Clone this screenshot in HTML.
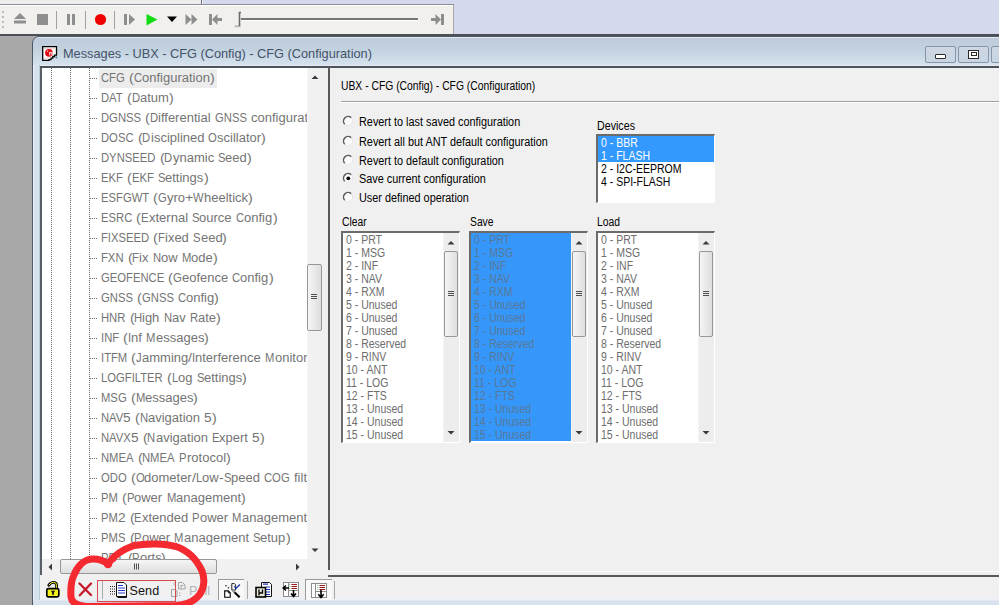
<!DOCTYPE html><html><head><meta charset="utf-8"><title>u-center</title><style>
*{box-sizing:border-box;margin:0;padding:0}
html,body{width:999px;height:605px;overflow:hidden;background:#a8a8a8;font-family:"Liberation Sans",sans-serif;position:relative}
.a{position:absolute}
.tb{background:#f0f0f0}
.it{position:absolute;height:20px;line-height:20px;font-size:12.5px;color:#747474;white-space:nowrap}
.ms{position:absolute;font-size:11px;line-height:13px;color:#000;white-space:nowrap}
.li{position:absolute;left:0;height:13px;line-height:13px;font-size:11px;white-space:nowrap}
</style></head><body>
<div class="a" style="left:0px;top:0px;width:201px;height:4px;background:#ededed"></div>
<div class="a" style="left:201px;top:0px;width:1px;height:4px;background:#6c6c78"></div>
<div class="a" style="left:202px;top:0px;width:1px;height:4px;background:#f4f4f8"></div>
<div class="a" style="left:203px;top:0px;width:796px;height:35px;background:#d5d9ed"></div>
<div class="a" style="left:0px;top:4px;width:454px;height:1px;background:#8c8c94"></div>
<div class="a" style="left:0px;top:5px;width:453px;height:29px;background:#f1f0ec;border-top:1px solid #fff"></div>
<div class="a" style="left:453px;top:5px;width:1px;height:29px;background:#a8a8a8"></div>
<svg class="a" style="left:0px;top:8px" width="8" height="24" viewBox="0 0 8 24"><rect x="2" y="3" width="2" height="2" fill="#bcbcbc"/><rect x="2" y="8" width="2" height="2" fill="#bcbcbc"/><rect x="2" y="13" width="2" height="2" fill="#bcbcbc"/><rect x="2" y="18" width="2" height="2" fill="#bcbcbc"/></svg>
<svg class="a" style="left:12px;top:10px" width="16" height="16" viewBox="0 0 16 16"><path d="M2 9 L8 3 L14 9 Z" fill="#8e8e8e"/><rect x="2" y="10.5" width="12" height="3" fill="#8e8e8e"/></svg>
<div class="a" style="left:37px;top:14px;width:11px;height:11px;background:#8e8e8e"></div>
<div class="a" style="left:56px;top:11px;width:1px;height:18px;background:#a0a0a0"></div>
<div class="a" style="left:67px;top:14px;width:3px;height:11px;background:#8e8e8e"></div>
<div class="a" style="left:72px;top:14px;width:3px;height:11px;background:#8e8e8e"></div>
<div class="a" style="left:85px;top:11px;width:1px;height:18px;background:#a0a0a0"></div>
<svg class="a" style="left:94px;top:13px" width="13" height="13" viewBox="0 0 13 13"><circle cx="6.5" cy="6.5" r="5.6" fill="#ee0000"/></svg>
<div class="a" style="left:114px;top:11px;width:1px;height:18px;background:#a0a0a0"></div>
<svg class="a" style="left:122px;top:12px" width="16" height="16" viewBox="0 0 16 16"><rect x="2" y="2" width="3" height="11" fill="#8e8e8e"/><path d="M7 2 L13 7.5 L7 13 Z" fill="#8e8e8e"/></svg>
<svg class="a" style="left:145px;top:12px" width="16" height="16" viewBox="0 0 16 16"><path d="M1.5 2 L12.5 7.5 L1.5 13.5 Z" fill="#11dd11"/></svg>
<svg class="a" style="left:166px;top:15px" width="12" height="8" viewBox="0 0 12 8"><path d="M1 1.5 L11 1.5 L6 7 Z" fill="#000"/></svg>
<svg class="a" style="left:184px;top:12px" width="16" height="16" viewBox="0 0 16 16"><path d="M1.5 2 L7.5 7.5 L1.5 13 Z M7.5 2 L13.5 7.5 L7.5 13 Z" fill="#8e8e8e"/></svg>
<svg class="a" style="left:207px;top:12px" width="17" height="16" viewBox="0 0 17 16"><rect x="2" y="2" width="3" height="11" fill="#8e8e8e"/><path d="M5 7.5 L10.5 2 L10.5 6 L15 6 L15 9 L10.5 9 L10.5 13 Z" fill="#8e8e8e"/></svg>
<div class="a" style="left:241px;top:18px;width:177px;height:3px;background:#777;border-bottom:1px solid #fff"></div>
<svg class="a" style="left:233px;top:11px" width="10" height="17" viewBox="0 0 10 17"><path d="M1.5 15.5 H6.5 V1.5 H8" stroke="#6a6a6a" stroke-width="1.6" fill="none"/><path d="M0 16 H7" stroke="#fff" stroke-width="1"/></svg>
<svg class="a" style="left:429px;top:12px" width="17" height="16" viewBox="0 0 17 16"><rect x="12" y="2" width="3" height="11" fill="#8e8e8e"/><path d="M12 7.5 L6.5 2 L6.5 6 L2 6 L2 9 L6.5 9 L6.5 13 Z" fill="#8e8e8e"/></svg>
<div class="a" style="left:0px;top:34px;width:999px;height:2px;background:#4b4f57"></div>
<div class="a" style="left:32px;top:36px;width:981px;height:580px;border:1px solid #4f5966;border-radius:7px 0 0 0;background:linear-gradient(#e2e9ee 0,#e2e9ee 1px,#c0cbdc 1px,#c2d2de 13px,#d3e1ed 27px,#dbe6ef 28px,#d3e1ee 28px)"></div>
<svg class="a" style="left:42px;top:46px" width="17" height="16" viewBox="0 0 17 16"><path d="M0.7 0.7 H14.5 V9.2 H12.5 V10.5 H10.8 V12.2 H9 V13.6 H7 V14.4 H0.7 Z" fill="#fff" stroke="#000" stroke-width="1.3"/><path d="M2 2.5 H13 M2 12 H8" stroke="#f6caca" stroke-width="0.8"/><circle cx="7" cy="6.8" r="3.9" fill="#e00a14"/><circle cx="5.6" cy="5.2" r="0.7" fill="#ffc8c8"/><path d="M7.6 9.5 V6.2 M9.2 9.5 V6.2 M10.8 9.5 V6.5 M7.6 6.4 H10.6" stroke="#fff3f3" stroke-width="0.8" fill="none"/><circle cx="14.4" cy="11.4" r="0.9" fill="#2a7a90"/></svg>
<div class="a" style="left:63px;top:45px;font-size:12.75px;color:#44526a;white-space:nowrap;line-height:18px">Messages - UBX - CFG (Config) - CFG (Configuration)</div>
<div class="a" style="left:925px;top:46px;width:31px;height:17px;border:1px solid #8795a7;border-radius:2px;background:linear-gradient(#cdd7e3,#c9d5e2)"></div>
<div class="a" style="left:958px;top:46px;width:31px;height:17px;border:1px solid #8795a7;border-radius:2px;background:linear-gradient(#cdd7e3,#c9d5e2)"></div>
<div class="a" style="left:991px;top:46px;width:31px;height:17px;border:1px solid #8795a7;border-radius:2px;background:linear-gradient(#cdd7e3,#c9d5e2)"></div>
<div class="a" style="left:935px;top:54px;width:11px;height:5px;border:1px solid #2a2a2a;border-radius:1px;background:#fff"></div>
<div class="a" style="left:968px;top:50px;width:11px;height:9px;border:1px solid #2a2a2a;background:#fff"></div>
<div class="a" style="left:971px;top:52px;width:6px;height:4px;border:1px solid #2a2a2a;background:#fff"></div>
<div class="a" style="left:40px;top:65px;width:959px;height:1px;background:#e3eaef"></div>
<div class="a" style="left:40px;top:66px;width:959px;height:2px;background:#4e535a"></div>
<div class="a" style="left:40px;top:68px;width:959px;height:532px;background:#f0f0f0"></div>
<div class="a" style="left:34px;top:598px;width:965px;height:7px;background:linear-gradient(#eff1f5 0,#eaeff6 2px,#d9e1eb 3px,#d8e2ed 5px,#d6e4f0 6px)"></div>
<div class="a" style="left:33px;top:65px;width:1px;height:535px;background:#eef3f7"></div>
<div class="a" style="left:34px;top:65px;width:6px;height:535px;background:linear-gradient(90deg,#d3e1ee,#d6e4f0 80%,#a8b4c0)"></div>
<div class="a" style="left:40px;top:68px;width:2px;height:507px;background:#5a5f66"></div>
<div class="a" style="left:42px;top:68px;width:265px;height:491px;background:#fff"></div>
<div class="a" style="left:42px;top:68px;width:265px;height:491px;overflow:hidden">
<div class="a" style="left:57px;top:1px;width:118px;height:19px;background:#ececec"></div>
<div class="a" style="left:9px;top:0;width:1px;height:491px;background:repeating-linear-gradient(#6a6a6a 0 1px,transparent 1px 2px)"></div>
<div class="a" style="left:28px;top:0;width:1px;height:491px;background:repeating-linear-gradient(#6a6a6a 0 1px,transparent 1px 2px)"></div>
<div class="a" style="left:47px;top:0;width:1px;height:491px;background:repeating-linear-gradient(#6a6a6a 0 1px,transparent 1px 2px)"></div>
<div class="a" style="left:48px;top:10px;width:8px;height:1px;background:repeating-linear-gradient(90deg,#6a6a6a 0 1px,transparent 1px 2px)"></div>
<div class="it" style="left:59px;top:0px"><span style="display:inline-block;white-space:pre;transform:scaleX(0.9);transform-origin:0 0;margin-right:-2.64px">CFG</span><span style="display:inline-block;white-space:pre;transform:scaleX(1.21);transform-origin:0 0;margin-right:0.73px"> </span><span style="display:inline-block;white-space:pre;transform:scaleX(1.14);transform-origin:0 0;margin-right:0.58px">(</span><span style="display:inline-block;white-space:pre;transform:scaleX(0.9);transform-origin:0 0;margin-right:-0.90px">C</span><span style="display:inline-block;white-space:pre;transform:scaleX(1.04);transform-origin:0 0;margin-right:2.61px">onfiguration</span><span style="display:inline-block;white-space:pre;transform:scaleX(1.14);transform-origin:0 0;margin-right:0.58px">)</span></div>
<div class="a" style="left:48px;top:30px;width:8px;height:1px;background:repeating-linear-gradient(90deg,#6a6a6a 0 1px,transparent 1px 2px)"></div>
<div class="it" style="left:59px;top:20px"><span style="display:inline-block;white-space:pre;transform:scaleX(0.9);transform-origin:0 0;margin-right:-2.41px">DAT</span><span style="display:inline-block;white-space:pre;transform:scaleX(1.21);transform-origin:0 0;margin-right:0.73px"> </span><span style="display:inline-block;white-space:pre;transform:scaleX(1.14);transform-origin:0 0;margin-right:0.58px">(</span><span style="display:inline-block;white-space:pre;transform:scaleX(0.9);transform-origin:0 0;margin-right:-0.90px">D</span><span style="display:inline-block;white-space:pre;transform:scaleX(1.04);transform-origin:0 0;margin-right:1.11px">atum</span><span style="display:inline-block;white-space:pre;transform:scaleX(1.14);transform-origin:0 0;margin-right:0.58px">)</span></div>
<div class="a" style="left:48px;top:50px;width:8px;height:1px;background:repeating-linear-gradient(90deg,#6a6a6a 0 1px,transparent 1px 2px)"></div>
<div class="it" style="left:59px;top:40px"><span style="display:inline-block;white-space:pre;transform:scaleX(0.9);transform-origin:0 0;margin-right:-4.45px">DGNSS</span><span style="display:inline-block;white-space:pre;transform:scaleX(1.21);transform-origin:0 0;margin-right:0.73px"> </span><span style="display:inline-block;white-space:pre;transform:scaleX(1.14);transform-origin:0 0;margin-right:0.58px">(</span><span style="display:inline-block;white-space:pre;transform:scaleX(0.9);transform-origin:0 0;margin-right:-0.90px">D</span><span style="display:inline-block;white-space:pre;transform:scaleX(1.04);transform-origin:0 0;margin-right:2.02px">ifferential</span><span style="display:inline-block;white-space:pre;transform:scaleX(1.21);transform-origin:0 0;margin-right:0.73px"> </span><span style="display:inline-block;white-space:pre;transform:scaleX(0.9);transform-origin:0 0;margin-right:-3.54px">GNSS</span><span style="display:inline-block;white-space:pre;transform:scaleX(1.21);transform-origin:0 0;margin-right:0.73px"> </span><span style="display:inline-block;white-space:pre;transform:scaleX(1.04);transform-origin:0 0;margin-right:2.86px">configuration</span><span style="display:inline-block;white-space:pre;transform:scaleX(1.14);transform-origin:0 0;margin-right:0.58px">)</span></div>
<div class="a" style="left:48px;top:70px;width:8px;height:1px;background:repeating-linear-gradient(90deg,#6a6a6a 0 1px,transparent 1px 2px)"></div>
<div class="it" style="left:59px;top:60px"><span style="display:inline-block;white-space:pre;transform:scaleX(0.9);transform-origin:0 0;margin-right:-3.61px">DOSC</span><span style="display:inline-block;white-space:pre;transform:scaleX(1.21);transform-origin:0 0;margin-right:0.73px"> </span><span style="display:inline-block;white-space:pre;transform:scaleX(1.14);transform-origin:0 0;margin-right:0.58px">(</span><span style="display:inline-block;white-space:pre;transform:scaleX(0.9);transform-origin:0 0;margin-right:-0.90px">D</span><span style="display:inline-block;white-space:pre;transform:scaleX(1.04);transform-origin:0 0;margin-right:2.06px">isciplined</span><span style="display:inline-block;white-space:pre;transform:scaleX(1.21);transform-origin:0 0;margin-right:0.73px"> </span><span style="display:inline-block;white-space:pre;transform:scaleX(0.9);transform-origin:0 0;margin-right:-0.97px">O</span><span style="display:inline-block;white-space:pre;transform:scaleX(1.04);transform-origin:0 0;margin-right:1.69px">scillator</span><span style="display:inline-block;white-space:pre;transform:scaleX(1.14);transform-origin:0 0;margin-right:0.58px">)</span></div>
<div class="a" style="left:48px;top:90px;width:8px;height:1px;background:repeating-linear-gradient(90deg,#6a6a6a 0 1px,transparent 1px 2px)"></div>
<div class="it" style="left:59px;top:80px"><span style="display:inline-block;white-space:pre;transform:scaleX(0.9);transform-origin:0 0;margin-right:-6.04px">DYNSEED</span><span style="display:inline-block;white-space:pre;transform:scaleX(1.21);transform-origin:0 0;margin-right:0.73px"> </span><span style="display:inline-block;white-space:pre;transform:scaleX(1.14);transform-origin:0 0;margin-right:0.58px">(</span><span style="display:inline-block;white-space:pre;transform:scaleX(0.9);transform-origin:0 0;margin-right:-0.90px">D</span><span style="display:inline-block;white-space:pre;transform:scaleX(1.04);transform-origin:0 0;margin-right:1.58px">ynamic</span><span style="display:inline-block;white-space:pre;transform:scaleX(1.21);transform-origin:0 0;margin-right:0.73px"> </span><span style="display:inline-block;white-space:pre;transform:scaleX(0.9);transform-origin:0 0;margin-right:-0.83px">S</span><span style="display:inline-block;white-space:pre;transform:scaleX(1.04);transform-origin:0 0;margin-right:0.83px">eed</span><span style="display:inline-block;white-space:pre;transform:scaleX(1.14);transform-origin:0 0;margin-right:0.58px">)</span></div>
<div class="a" style="left:48px;top:110px;width:8px;height:1px;background:repeating-linear-gradient(90deg,#6a6a6a 0 1px,transparent 1px 2px)"></div>
<div class="it" style="left:59px;top:100px"><span style="display:inline-block;white-space:pre;transform:scaleX(0.9);transform-origin:0 0;margin-right:-2.43px">EKF</span><span style="display:inline-block;white-space:pre;transform:scaleX(1.21);transform-origin:0 0;margin-right:0.73px"> </span><span style="display:inline-block;white-space:pre;transform:scaleX(1.14);transform-origin:0 0;margin-right:0.58px">(</span><span style="display:inline-block;white-space:pre;transform:scaleX(0.9);transform-origin:0 0;margin-right:-2.43px">EKF</span><span style="display:inline-block;white-space:pre;transform:scaleX(1.21);transform-origin:0 0;margin-right:0.73px"> </span><span style="display:inline-block;white-space:pre;transform:scaleX(0.9);transform-origin:0 0;margin-right:-0.83px">S</span><span style="display:inline-block;white-space:pre;transform:scaleX(1.04);transform-origin:0 0;margin-right:1.47px">ettings</span><span style="display:inline-block;white-space:pre;transform:scaleX(1.14);transform-origin:0 0;margin-right:0.58px">)</span></div>
<div class="a" style="left:48px;top:130px;width:8px;height:1px;background:repeating-linear-gradient(90deg,#6a6a6a 0 1px,transparent 1px 2px)"></div>
<div class="it" style="left:59px;top:120px"><span style="display:inline-block;white-space:pre;transform:scaleX(0.9);transform-origin:0 0;margin-right:-5.35px">ESFGWT</span><span style="display:inline-block;white-space:pre;transform:scaleX(1.21);transform-origin:0 0;margin-right:0.73px"> </span><span style="display:inline-block;white-space:pre;transform:scaleX(1.14);transform-origin:0 0;margin-right:0.58px">(</span><span style="display:inline-block;white-space:pre;transform:scaleX(0.9);transform-origin:0 0;margin-right:-0.97px">G</span><span style="display:inline-block;white-space:pre;transform:scaleX(1.04);transform-origin:0 0;margin-right:0.69px">yro</span><span style="display:inline-block;white-space:pre;transform:scaleX(1.14);transform-origin:0 0;margin-right:1.02px">+</span><span style="display:inline-block;white-space:pre;transform:scaleX(0.9);transform-origin:0 0;margin-right:-1.18px">W</span><span style="display:inline-block;white-space:pre;transform:scaleX(1.04);transform-origin:0 0;margin-right:1.70px">heeltick</span><span style="display:inline-block;white-space:pre;transform:scaleX(1.14);transform-origin:0 0;margin-right:0.58px">)</span></div>
<div class="a" style="left:48px;top:150px;width:8px;height:1px;background:repeating-linear-gradient(90deg,#6a6a6a 0 1px,transparent 1px 2px)"></div>
<div class="it" style="left:59px;top:140px"><span style="display:inline-block;white-space:pre;transform:scaleX(0.9);transform-origin:0 0;margin-right:-3.47px">ESRC</span><span style="display:inline-block;white-space:pre;transform:scaleX(1.21);transform-origin:0 0;margin-right:0.73px"> </span><span style="display:inline-block;white-space:pre;transform:scaleX(1.14);transform-origin:0 0;margin-right:0.58px">(</span><span style="display:inline-block;white-space:pre;transform:scaleX(0.9);transform-origin:0 0;margin-right:-0.83px">E</span><span style="display:inline-block;white-space:pre;transform:scaleX(1.04);transform-origin:0 0;margin-right:1.50px">xternal</span><span style="display:inline-block;white-space:pre;transform:scaleX(1.21);transform-origin:0 0;margin-right:0.73px"> </span><span style="display:inline-block;white-space:pre;transform:scaleX(0.9);transform-origin:0 0;margin-right:-0.83px">S</span><span style="display:inline-block;white-space:pre;transform:scaleX(1.04);transform-origin:0 0;margin-right:1.25px">ource</span><span style="display:inline-block;white-space:pre;transform:scaleX(1.21);transform-origin:0 0;margin-right:0.73px"> </span><span style="display:inline-block;white-space:pre;transform:scaleX(0.9);transform-origin:0 0;margin-right:-0.90px">C</span><span style="display:inline-block;white-space:pre;transform:scaleX(1.04);transform-origin:0 0;margin-right:1.08px">onfig</span><span style="display:inline-block;white-space:pre;transform:scaleX(1.14);transform-origin:0 0;margin-right:0.58px">)</span></div>
<div class="a" style="left:48px;top:170px;width:8px;height:1px;background:repeating-linear-gradient(90deg,#6a6a6a 0 1px,transparent 1px 2px)"></div>
<div class="it" style="left:59px;top:160px"><span style="display:inline-block;white-space:pre;transform:scaleX(0.9);transform-origin:0 0;margin-right:-5.35px">FIXSEED</span><span style="display:inline-block;white-space:pre;transform:scaleX(1.21);transform-origin:0 0;margin-right:0.73px"> </span><span style="display:inline-block;white-space:pre;transform:scaleX(1.14);transform-origin:0 0;margin-right:0.58px">(</span><span style="display:inline-block;white-space:pre;transform:scaleX(0.9);transform-origin:0 0;margin-right:-0.76px">F</span><span style="display:inline-block;white-space:pre;transform:scaleX(1.04);transform-origin:0 0;margin-right:0.92px">ixed</span><span style="display:inline-block;white-space:pre;transform:scaleX(1.21);transform-origin:0 0;margin-right:0.73px"> </span><span style="display:inline-block;white-space:pre;transform:scaleX(0.9);transform-origin:0 0;margin-right:-0.83px">S</span><span style="display:inline-block;white-space:pre;transform:scaleX(1.04);transform-origin:0 0;margin-right:0.83px">eed</span><span style="display:inline-block;white-space:pre;transform:scaleX(1.14);transform-origin:0 0;margin-right:0.58px">)</span></div>
<div class="a" style="left:48px;top:190px;width:8px;height:1px;background:repeating-linear-gradient(90deg,#6a6a6a 0 1px,transparent 1px 2px)"></div>
<div class="it" style="left:59px;top:180px"><span style="display:inline-block;white-space:pre;transform:scaleX(0.9);transform-origin:0 0;margin-right:-2.50px">FXN</span><span style="display:inline-block;white-space:pre;transform:scaleX(1.21);transform-origin:0 0;margin-right:0.73px"> </span><span style="display:inline-block;white-space:pre;transform:scaleX(1.14);transform-origin:0 0;margin-right:0.58px">(</span><span style="display:inline-block;white-space:pre;transform:scaleX(0.9);transform-origin:0 0;margin-right:-0.76px">F</span><span style="display:inline-block;white-space:pre;transform:scaleX(1.04);transform-origin:0 0;margin-right:0.36px">ix</span><span style="display:inline-block;white-space:pre;transform:scaleX(1.21);transform-origin:0 0;margin-right:0.73px"> </span><span style="display:inline-block;white-space:pre;transform:scaleX(0.9);transform-origin:0 0;margin-right:-0.90px">N</span><span style="display:inline-block;white-space:pre;transform:scaleX(1.04);transform-origin:0 0;margin-right:0.64px">ow</span><span style="display:inline-block;white-space:pre;transform:scaleX(1.21);transform-origin:0 0;margin-right:0.73px"> </span><span style="display:inline-block;white-space:pre;transform:scaleX(0.9);transform-origin:0 0;margin-right:-1.04px">M</span><span style="display:inline-block;white-space:pre;transform:scaleX(1.04);transform-origin:0 0;margin-right:0.83px">ode</span><span style="display:inline-block;white-space:pre;transform:scaleX(1.14);transform-origin:0 0;margin-right:0.58px">)</span></div>
<div class="a" style="left:48px;top:210px;width:8px;height:1px;background:repeating-linear-gradient(90deg,#6a6a6a 0 1px,transparent 1px 2px)"></div>
<div class="it" style="left:59px;top:200px"><span style="display:inline-block;white-space:pre;transform:scaleX(0.9);transform-origin:0 0;margin-right:-7.01px">GEOFENCE</span><span style="display:inline-block;white-space:pre;transform:scaleX(1.21);transform-origin:0 0;margin-right:0.73px"> </span><span style="display:inline-block;white-space:pre;transform:scaleX(1.14);transform-origin:0 0;margin-right:0.58px">(</span><span style="display:inline-block;white-space:pre;transform:scaleX(0.9);transform-origin:0 0;margin-right:-0.97px">G</span><span style="display:inline-block;white-space:pre;transform:scaleX(1.04);transform-origin:0 0;margin-right:1.78px">eofence</span><span style="display:inline-block;white-space:pre;transform:scaleX(1.21);transform-origin:0 0;margin-right:0.73px"> </span><span style="display:inline-block;white-space:pre;transform:scaleX(0.9);transform-origin:0 0;margin-right:-0.90px">C</span><span style="display:inline-block;white-space:pre;transform:scaleX(1.04);transform-origin:0 0;margin-right:1.08px">onfig</span><span style="display:inline-block;white-space:pre;transform:scaleX(1.14);transform-origin:0 0;margin-right:0.58px">)</span></div>
<div class="a" style="left:48px;top:230px;width:8px;height:1px;background:repeating-linear-gradient(90deg,#6a6a6a 0 1px,transparent 1px 2px)"></div>
<div class="it" style="left:59px;top:220px"><span style="display:inline-block;white-space:pre;transform:scaleX(0.9);transform-origin:0 0;margin-right:-3.54px">GNSS</span><span style="display:inline-block;white-space:pre;transform:scaleX(1.21);transform-origin:0 0;margin-right:0.73px"> </span><span style="display:inline-block;white-space:pre;transform:scaleX(1.14);transform-origin:0 0;margin-right:0.58px">(</span><span style="display:inline-block;white-space:pre;transform:scaleX(0.9);transform-origin:0 0;margin-right:-3.54px">GNSS</span><span style="display:inline-block;white-space:pre;transform:scaleX(1.21);transform-origin:0 0;margin-right:0.73px"> </span><span style="display:inline-block;white-space:pre;transform:scaleX(0.9);transform-origin:0 0;margin-right:-0.90px">C</span><span style="display:inline-block;white-space:pre;transform:scaleX(1.04);transform-origin:0 0;margin-right:1.08px">onfig</span><span style="display:inline-block;white-space:pre;transform:scaleX(1.14);transform-origin:0 0;margin-right:0.58px">)</span></div>
<div class="a" style="left:48px;top:250px;width:8px;height:1px;background:repeating-linear-gradient(90deg,#6a6a6a 0 1px,transparent 1px 2px)"></div>
<div class="it" style="left:59px;top:240px"><span style="display:inline-block;white-space:pre;transform:scaleX(0.9);transform-origin:0 0;margin-right:-2.71px">HNR</span><span style="display:inline-block;white-space:pre;transform:scaleX(1.21);transform-origin:0 0;margin-right:0.73px"> </span><span style="display:inline-block;white-space:pre;transform:scaleX(1.14);transform-origin:0 0;margin-right:0.58px">(</span><span style="display:inline-block;white-space:pre;transform:scaleX(0.9);transform-origin:0 0;margin-right:-0.90px">H</span><span style="display:inline-block;white-space:pre;transform:scaleX(1.04);transform-origin:0 0;margin-right:0.67px">igh</span><span style="display:inline-block;white-space:pre;transform:scaleX(1.21);transform-origin:0 0;margin-right:0.73px"> </span><span style="display:inline-block;white-space:pre;transform:scaleX(0.9);transform-origin:0 0;margin-right:-0.90px">N</span><span style="display:inline-block;white-space:pre;transform:scaleX(1.04);transform-origin:0 0;margin-right:0.53px">av</span><span style="display:inline-block;white-space:pre;transform:scaleX(1.21);transform-origin:0 0;margin-right:0.73px"> </span><span style="display:inline-block;white-space:pre;transform:scaleX(0.9);transform-origin:0 0;margin-right:-0.90px">R</span><span style="display:inline-block;white-space:pre;transform:scaleX(1.04);transform-origin:0 0;margin-right:0.70px">ate</span><span style="display:inline-block;white-space:pre;transform:scaleX(1.14);transform-origin:0 0;margin-right:0.58px">)</span></div>
<div class="a" style="left:48px;top:270px;width:8px;height:1px;background:repeating-linear-gradient(90deg,#6a6a6a 0 1px,transparent 1px 2px)"></div>
<div class="it" style="left:59px;top:260px"><span style="display:inline-block;white-space:pre;transform:scaleX(0.9);transform-origin:0 0;margin-right:-2.01px">INF</span><span style="display:inline-block;white-space:pre;transform:scaleX(1.21);transform-origin:0 0;margin-right:0.73px"> </span><span style="display:inline-block;white-space:pre;transform:scaleX(1.14);transform-origin:0 0;margin-right:0.58px">(</span><span style="display:inline-block;white-space:pre;transform:scaleX(0.9);transform-origin:0 0;margin-right:-0.35px">I</span><span style="display:inline-block;white-space:pre;transform:scaleX(1.04);transform-origin:0 0;margin-right:0.42px">nf</span><span style="display:inline-block;white-space:pre;transform:scaleX(1.21);transform-origin:0 0;margin-right:0.73px"> </span><span style="display:inline-block;white-space:pre;transform:scaleX(0.9);transform-origin:0 0;margin-right:-1.04px">M</span><span style="display:inline-block;white-space:pre;transform:scaleX(1.04);transform-origin:0 0;margin-right:1.86px">essages</span><span style="display:inline-block;white-space:pre;transform:scaleX(1.14);transform-origin:0 0;margin-right:0.58px">)</span></div>
<div class="a" style="left:48px;top:290px;width:8px;height:1px;background:repeating-linear-gradient(90deg,#6a6a6a 0 1px,transparent 1px 2px)"></div>
<div class="it" style="left:59px;top:280px"><span style="display:inline-block;white-space:pre;transform:scaleX(0.9);transform-origin:0 0;margin-right:-2.92px">ITFM</span><span style="display:inline-block;white-space:pre;transform:scaleX(1.21);transform-origin:0 0;margin-right:0.73px"> </span><span style="display:inline-block;white-space:pre;transform:scaleX(1.14);transform-origin:0 0;margin-right:0.58px">(</span><span style="display:inline-block;white-space:pre;transform:scaleX(0.9);transform-origin:0 0;margin-right:-0.62px">J</span><span style="display:inline-block;white-space:pre;transform:scaleX(1.04);transform-origin:0 0;margin-right:1.78px">amming</span><span style="display:inline-block;white-space:pre;transform:scaleX(1.14);transform-origin:0 0;margin-right:0.49px">/</span><span style="display:inline-block;white-space:pre;transform:scaleX(0.9);transform-origin:0 0;margin-right:-0.35px">I</span><span style="display:inline-block;white-space:pre;transform:scaleX(1.04);transform-origin:0 0;margin-right:2.53px">nterference</span><span style="display:inline-block;white-space:pre;transform:scaleX(1.21);transform-origin:0 0;margin-right:0.73px"> </span><span style="display:inline-block;white-space:pre;transform:scaleX(0.9);transform-origin:0 0;margin-right:-1.04px">M</span><span style="display:inline-block;white-space:pre;transform:scaleX(1.04);transform-origin:0 0;margin-right:1.25px">onitor</span><span style="display:inline-block;white-space:pre;transform:scaleX(1.14);transform-origin:0 0;margin-right:0.58px">)</span></div>
<div class="a" style="left:48px;top:310px;width:8px;height:1px;background:repeating-linear-gradient(90deg,#6a6a6a 0 1px,transparent 1px 2px)"></div>
<div class="it" style="left:59px;top:300px"><span style="display:inline-block;white-space:pre;transform:scaleX(0.9);transform-origin:0 0;margin-right:-6.85px">LOGFILTER</span><span style="display:inline-block;white-space:pre;transform:scaleX(1.21);transform-origin:0 0;margin-right:0.73px"> </span><span style="display:inline-block;white-space:pre;transform:scaleX(1.14);transform-origin:0 0;margin-right:0.58px">(</span><span style="display:inline-block;white-space:pre;transform:scaleX(0.9);transform-origin:0 0;margin-right:-0.70px">L</span><span style="display:inline-block;white-space:pre;transform:scaleX(1.04);transform-origin:0 0;margin-right:0.56px">og</span><span style="display:inline-block;white-space:pre;transform:scaleX(1.21);transform-origin:0 0;margin-right:0.73px"> </span><span style="display:inline-block;white-space:pre;transform:scaleX(0.9);transform-origin:0 0;margin-right:-0.83px">S</span><span style="display:inline-block;white-space:pre;transform:scaleX(1.04);transform-origin:0 0;margin-right:1.47px">ettings</span><span style="display:inline-block;white-space:pre;transform:scaleX(1.14);transform-origin:0 0;margin-right:0.58px">)</span></div>
<div class="a" style="left:48px;top:330px;width:8px;height:1px;background:repeating-linear-gradient(90deg,#6a6a6a 0 1px,transparent 1px 2px)"></div>
<div class="it" style="left:59px;top:320px"><span style="display:inline-block;white-space:pre;transform:scaleX(0.9);transform-origin:0 0;margin-right:-2.85px">MSG</span><span style="display:inline-block;white-space:pre;transform:scaleX(1.21);transform-origin:0 0;margin-right:0.73px"> </span><span style="display:inline-block;white-space:pre;transform:scaleX(1.14);transform-origin:0 0;margin-right:0.58px">(</span><span style="display:inline-block;white-space:pre;transform:scaleX(0.9);transform-origin:0 0;margin-right:-1.04px">M</span><span style="display:inline-block;white-space:pre;transform:scaleX(1.04);transform-origin:0 0;margin-right:1.86px">essages</span><span style="display:inline-block;white-space:pre;transform:scaleX(1.14);transform-origin:0 0;margin-right:0.58px">)</span></div>
<div class="a" style="left:48px;top:350px;width:8px;height:1px;background:repeating-linear-gradient(90deg,#6a6a6a 0 1px,transparent 1px 2px)"></div>
<div class="it" style="left:59px;top:340px"><span style="display:inline-block;white-space:pre;transform:scaleX(0.9);transform-origin:0 0;margin-right:-2.48px">NAV</span><span style="display:inline-block;white-space:pre;transform:scaleX(1.1);transform-origin:0 0;margin-right:0.70px">5</span><span style="display:inline-block;white-space:pre;transform:scaleX(1.21);transform-origin:0 0;margin-right:0.73px"> </span><span style="display:inline-block;white-space:pre;transform:scaleX(1.14);transform-origin:0 0;margin-right:0.58px">(</span><span style="display:inline-block;white-space:pre;transform:scaleX(0.9);transform-origin:0 0;margin-right:-0.90px">N</span><span style="display:inline-block;white-space:pre;transform:scaleX(1.04);transform-origin:0 0;margin-right:2.00px">avigation</span><span style="display:inline-block;white-space:pre;transform:scaleX(1.21);transform-origin:0 0;margin-right:0.73px"> </span><span style="display:inline-block;white-space:pre;transform:scaleX(1.1);transform-origin:0 0;margin-right:0.70px">5</span><span style="display:inline-block;white-space:pre;transform:scaleX(1.14);transform-origin:0 0;margin-right:0.58px">)</span></div>
<div class="a" style="left:48px;top:370px;width:8px;height:1px;background:repeating-linear-gradient(90deg,#6a6a6a 0 1px,transparent 1px 2px)"></div>
<div class="it" style="left:59px;top:360px"><span style="display:inline-block;white-space:pre;transform:scaleX(0.9);transform-origin:0 0;margin-right:-3.31px">NAVX</span><span style="display:inline-block;white-space:pre;transform:scaleX(1.1);transform-origin:0 0;margin-right:0.70px">5</span><span style="display:inline-block;white-space:pre;transform:scaleX(1.21);transform-origin:0 0;margin-right:0.73px"> </span><span style="display:inline-block;white-space:pre;transform:scaleX(1.14);transform-origin:0 0;margin-right:0.58px">(</span><span style="display:inline-block;white-space:pre;transform:scaleX(0.9);transform-origin:0 0;margin-right:-0.90px">N</span><span style="display:inline-block;white-space:pre;transform:scaleX(1.04);transform-origin:0 0;margin-right:2.00px">avigation</span><span style="display:inline-block;white-space:pre;transform:scaleX(1.21);transform-origin:0 0;margin-right:0.73px"> </span><span style="display:inline-block;white-space:pre;transform:scaleX(0.9);transform-origin:0 0;margin-right:-0.83px">E</span><span style="display:inline-block;white-space:pre;transform:scaleX(1.04);transform-origin:0 0;margin-right:1.11px">xpert</span><span style="display:inline-block;white-space:pre;transform:scaleX(1.21);transform-origin:0 0;margin-right:0.73px"> </span><span style="display:inline-block;white-space:pre;transform:scaleX(1.1);transform-origin:0 0;margin-right:0.70px">5</span><span style="display:inline-block;white-space:pre;transform:scaleX(1.14);transform-origin:0 0;margin-right:0.58px">)</span></div>
<div class="a" style="left:48px;top:390px;width:8px;height:1px;background:repeating-linear-gradient(90deg,#6a6a6a 0 1px,transparent 1px 2px)"></div>
<div class="it" style="left:59px;top:380px"><span style="display:inline-block;white-space:pre;transform:scaleX(0.9);transform-origin:0 0;margin-right:-3.61px">NMEA</span><span style="display:inline-block;white-space:pre;transform:scaleX(1.21);transform-origin:0 0;margin-right:0.73px"> </span><span style="display:inline-block;white-space:pre;transform:scaleX(1.14);transform-origin:0 0;margin-right:0.58px">(</span><span style="display:inline-block;white-space:pre;transform:scaleX(0.9);transform-origin:0 0;margin-right:-3.61px">NMEA</span><span style="display:inline-block;white-space:pre;transform:scaleX(1.21);transform-origin:0 0;margin-right:0.73px"> </span><span style="display:inline-block;white-space:pre;transform:scaleX(0.9);transform-origin:0 0;margin-right:-0.83px">P</span><span style="display:inline-block;white-space:pre;transform:scaleX(1.04);transform-origin:0 0;margin-right:1.50px">rotocol</span><span style="display:inline-block;white-space:pre;transform:scaleX(1.14);transform-origin:0 0;margin-right:0.58px">)</span></div>
<div class="a" style="left:48px;top:410px;width:8px;height:1px;background:repeating-linear-gradient(90deg,#6a6a6a 0 1px,transparent 1px 2px)"></div>
<div class="it" style="left:59px;top:400px"><span style="display:inline-block;white-space:pre;transform:scaleX(0.9);transform-origin:0 0;margin-right:-2.85px">ODO</span><span style="display:inline-block;white-space:pre;transform:scaleX(1.21);transform-origin:0 0;margin-right:0.73px"> </span><span style="display:inline-block;white-space:pre;transform:scaleX(1.14);transform-origin:0 0;margin-right:0.58px">(</span><span style="display:inline-block;white-space:pre;transform:scaleX(0.9);transform-origin:0 0;margin-right:-0.97px">O</span><span style="display:inline-block;white-space:pre;transform:scaleX(1.04);transform-origin:0 0;margin-right:1.83px">dometer</span><span style="display:inline-block;white-space:pre;transform:scaleX(1.14);transform-origin:0 0;margin-right:0.49px">/</span><span style="display:inline-block;white-space:pre;transform:scaleX(0.9);transform-origin:0 0;margin-right:-0.70px">L</span><span style="display:inline-block;white-space:pre;transform:scaleX(1.04);transform-origin:0 0;margin-right:0.64px">ow</span><span style="display:inline-block;white-space:pre;transform:scaleX(1.14);transform-origin:0 0;margin-right:0.58px">-</span><span style="display:inline-block;white-space:pre;transform:scaleX(0.9);transform-origin:0 0;margin-right:-0.83px">S</span><span style="display:inline-block;white-space:pre;transform:scaleX(1.04);transform-origin:0 0;margin-right:1.11px">peed</span><span style="display:inline-block;white-space:pre;transform:scaleX(1.21);transform-origin:0 0;margin-right:0.73px"> </span><span style="display:inline-block;white-space:pre;transform:scaleX(0.9);transform-origin:0 0;margin-right:-2.85px">COG</span><span style="display:inline-block;white-space:pre;transform:scaleX(1.21);transform-origin:0 0;margin-right:0.73px"> </span><span style="display:inline-block;white-space:pre;transform:scaleX(1.04);transform-origin:0 0;margin-right:0.94px">filter</span><span style="display:inline-block;white-space:pre;transform:scaleX(1.14);transform-origin:0 0;margin-right:0.58px">)</span></div>
<div class="a" style="left:48px;top:430px;width:8px;height:1px;background:repeating-linear-gradient(90deg,#6a6a6a 0 1px,transparent 1px 2px)"></div>
<div class="it" style="left:59px;top:420px"><span style="display:inline-block;white-space:pre;transform:scaleX(0.9);transform-origin:0 0;margin-right:-1.87px">PM</span><span style="display:inline-block;white-space:pre;transform:scaleX(1.21);transform-origin:0 0;margin-right:0.73px"> </span><span style="display:inline-block;white-space:pre;transform:scaleX(1.14);transform-origin:0 0;margin-right:0.58px">(</span><span style="display:inline-block;white-space:pre;transform:scaleX(0.9);transform-origin:0 0;margin-right:-0.83px">P</span><span style="display:inline-block;white-space:pre;transform:scaleX(1.04);transform-origin:0 0;margin-right:1.08px">ower</span><span style="display:inline-block;white-space:pre;transform:scaleX(1.21);transform-origin:0 0;margin-right:0.73px"> </span><span style="display:inline-block;white-space:pre;transform:scaleX(0.9);transform-origin:0 0;margin-right:-1.04px">M</span><span style="display:inline-block;white-space:pre;transform:scaleX(1.04);transform-origin:0 0;margin-right:2.50px">anagement</span><span style="display:inline-block;white-space:pre;transform:scaleX(1.14);transform-origin:0 0;margin-right:0.58px">)</span></div>
<div class="a" style="left:48px;top:450px;width:8px;height:1px;background:repeating-linear-gradient(90deg,#6a6a6a 0 1px,transparent 1px 2px)"></div>
<div class="it" style="left:59px;top:440px"><span style="display:inline-block;white-space:pre;transform:scaleX(0.9);transform-origin:0 0;margin-right:-1.87px">PM</span><span style="display:inline-block;white-space:pre;transform:scaleX(1.1);transform-origin:0 0;margin-right:0.70px">2</span><span style="display:inline-block;white-space:pre;transform:scaleX(1.21);transform-origin:0 0;margin-right:0.73px"> </span><span style="display:inline-block;white-space:pre;transform:scaleX(1.14);transform-origin:0 0;margin-right:0.58px">(</span><span style="display:inline-block;white-space:pre;transform:scaleX(0.9);transform-origin:0 0;margin-right:-0.83px">E</span><span style="display:inline-block;white-space:pre;transform:scaleX(1.04);transform-origin:0 0;margin-right:1.78px">xtended</span><span style="display:inline-block;white-space:pre;transform:scaleX(1.21);transform-origin:0 0;margin-right:0.73px"> </span><span style="display:inline-block;white-space:pre;transform:scaleX(0.9);transform-origin:0 0;margin-right:-0.83px">P</span><span style="display:inline-block;white-space:pre;transform:scaleX(1.04);transform-origin:0 0;margin-right:1.08px">ower</span><span style="display:inline-block;white-space:pre;transform:scaleX(1.21);transform-origin:0 0;margin-right:0.73px"> </span><span style="display:inline-block;white-space:pre;transform:scaleX(0.9);transform-origin:0 0;margin-right:-1.04px">M</span><span style="display:inline-block;white-space:pre;transform:scaleX(1.04);transform-origin:0 0;margin-right:2.50px">anagement</span><span style="display:inline-block;white-space:pre;transform:scaleX(1.14);transform-origin:0 0;margin-right:0.58px">)</span></div>
<div class="a" style="left:48px;top:470px;width:8px;height:1px;background:repeating-linear-gradient(90deg,#6a6a6a 0 1px,transparent 1px 2px)"></div>
<div class="it" style="left:59px;top:460px"><span style="display:inline-block;white-space:pre;transform:scaleX(0.9);transform-origin:0 0;margin-right:-2.71px">PMS</span><span style="display:inline-block;white-space:pre;transform:scaleX(1.21);transform-origin:0 0;margin-right:0.73px"> </span><span style="display:inline-block;white-space:pre;transform:scaleX(1.14);transform-origin:0 0;margin-right:0.58px">(</span><span style="display:inline-block;white-space:pre;transform:scaleX(0.9);transform-origin:0 0;margin-right:-0.83px">P</span><span style="display:inline-block;white-space:pre;transform:scaleX(1.04);transform-origin:0 0;margin-right:1.08px">ower</span><span style="display:inline-block;white-space:pre;transform:scaleX(1.21);transform-origin:0 0;margin-right:0.73px"> </span><span style="display:inline-block;white-space:pre;transform:scaleX(0.9);transform-origin:0 0;margin-right:-1.04px">M</span><span style="display:inline-block;white-space:pre;transform:scaleX(1.04);transform-origin:0 0;margin-right:2.50px">anagement</span><span style="display:inline-block;white-space:pre;transform:scaleX(1.21);transform-origin:0 0;margin-right:0.73px"> </span><span style="display:inline-block;white-space:pre;transform:scaleX(0.9);transform-origin:0 0;margin-right:-0.83px">S</span><span style="display:inline-block;white-space:pre;transform:scaleX(1.04);transform-origin:0 0;margin-right:0.97px">etup</span><span style="display:inline-block;white-space:pre;transform:scaleX(1.14);transform-origin:0 0;margin-right:0.58px">)</span></div>
<div class="a" style="left:48px;top:490px;width:8px;height:1px;background:repeating-linear-gradient(90deg,#6a6a6a 0 1px,transparent 1px 2px)"></div>
<div class="it" style="left:59px;top:480px"><span style="display:inline-block;white-space:pre;transform:scaleX(0.9);transform-origin:0 0;margin-right:-2.48px">PRT</span><span style="display:inline-block;white-space:pre;transform:scaleX(1.21);transform-origin:0 0;margin-right:0.73px"> </span><span style="display:inline-block;white-space:pre;transform:scaleX(1.14);transform-origin:0 0;margin-right:0.58px">(</span><span style="display:inline-block;white-space:pre;transform:scaleX(0.9);transform-origin:0 0;margin-right:-0.83px">P</span><span style="display:inline-block;white-space:pre;transform:scaleX(1.04);transform-origin:0 0;margin-right:0.83px">orts</span><span style="display:inline-block;white-space:pre;transform:scaleX(1.14);transform-origin:0 0;margin-right:0.58px">)</span></div>
</div>
<div class="a" style="left:307px;top:68px;width:16px;height:491px;background:#f1f1f1;border-left:1px solid #f6f6f6"></div>
<svg class="a" style="left:307px;top:69px" width="16" height="14" viewBox="0 0 16 14"><path d="M4.5 10 L8 6.5 L11.5 10 Z" fill="#3a3a3a"/></svg>
<svg class="a" style="left:307px;top:544px" width="16" height="14" viewBox="0 0 16 14"><path d="M4.5 4.5 L8 8 L11.5 4.5 Z" fill="#3a3a3a"/></svg>
<div class="a" style="left:307px;top:264px;width:15px;height:67px;border:1px solid #979797;border-radius:2px;background:linear-gradient(90deg,#f5f5f5,#dedede)"></div>
<svg class="a" style="left:307px;top:292px" width="15" height="12" viewBox="0 0 15 12"><path d="M4 2.5H10M4 4.5H10M4 6.5H10" stroke="#505050" stroke-width="1"/></svg>
<div class="a" style="left:42px;top:559px;width:265px;height:16px;background:#f1f1f1"></div>
<svg class="a" style="left:42px;top:559px" width="16" height="16" viewBox="0 0 16 16"><path d="M10 4.5 L6.5 8 L10 11.5 Z" fill="#3a3a3a"/></svg>
<svg class="a" style="left:290px;top:559px" width="16" height="16" viewBox="0 0 16 16"><path d="M6 4.5 L9.5 8 L6 11.5 Z" fill="#3a3a3a"/></svg>
<div class="a" style="left:60px;top:559px;width:157px;height:15px;border:1px solid #979797;border-radius:2px;background:linear-gradient(#f5f5f5,#dedede)"></div>
<svg class="a" style="left:130px;top:559px" width="14" height="15" viewBox="0 0 14 15"><path d="M4.5 4.5V10.5M6.5 4.5V10.5M8.5 4.5V10.5" stroke="#505050" stroke-width="1"/></svg>
<div class="a" style="left:307px;top:559px;width:16px;height:16px;background:#f0f0f0"></div>
<div class="a" style="left:323px;top:68px;width:6px;height:507px;background:#f0f0f0"></div>
<div class="a" style="left:328px;top:66px;width:2px;height:504px;background:#595959"></div>
<div class="a" style="left:330px;top:68px;width:669px;height:504px;background:#f0f0f0"></div>
<div class="a" style="left:330px;top:571px;width:669px;height:1px;background:#ffffff"></div>
<div class="a" style="left:328px;top:575px;width:671px;height:2px;background:#595959"></div>
<div class="a" style="left:340.5px;top:79.34px;font-size:12px;line-height:15px;color:#000;white-space:nowrap;letter-spacing:0px;word-spacing:0px;transform:scaleX(0.862);transform-origin:0 0;">UBX - CFG (Config) - CFG (Configuration)</div>
<div class="a" style="left:341px;top:101px;width:658px;height:1px;background:#a0a0a0"></div>
<div class="a" style="left:341px;top:102px;width:658px;height:1px;background:#ffffff"></div>
<svg class="a" style="left:341.5px;top:114.6px" width="12" height="12" viewBox="0 0 12 12"><circle cx="6" cy="6" r="4.6" fill="#fbfbfb"/><path d="M2.75 9.25 A4.6 4.6 0 0 1 9.25 2.75" stroke="#5a5a5a" stroke-width="1.5" fill="none"/><path d="M9.25 2.75 A4.6 4.6 0 0 1 2.75 9.25" stroke="#e2e2e2" stroke-width="0.8" fill="none"/></svg>
<div class="a" style="left:359px;top:115.34px;font-size:12px;line-height:15px;color:#000;white-space:nowrap;letter-spacing:0px;word-spacing:0px;transform:scaleX(0.905);transform-origin:0 0;">Revert to last saved configuration</div>
<svg class="a" style="left:341.5px;top:134.6px" width="12" height="12" viewBox="0 0 12 12"><circle cx="6" cy="6" r="4.6" fill="#fbfbfb"/><path d="M2.75 9.25 A4.6 4.6 0 0 1 9.25 2.75" stroke="#5a5a5a" stroke-width="1.5" fill="none"/><path d="M9.25 2.75 A4.6 4.6 0 0 1 2.75 9.25" stroke="#e2e2e2" stroke-width="0.8" fill="none"/></svg>
<div class="a" style="left:359px;top:135.34px;font-size:12px;line-height:15px;color:#000;white-space:nowrap;letter-spacing:0px;word-spacing:0px;transform:scaleX(0.905);transform-origin:0 0;">Revert all but ANT default configuration</div>
<svg class="a" style="left:341.5px;top:153.6px" width="12" height="12" viewBox="0 0 12 12"><circle cx="6" cy="6" r="4.6" fill="#fbfbfb"/><path d="M2.75 9.25 A4.6 4.6 0 0 1 9.25 2.75" stroke="#5a5a5a" stroke-width="1.5" fill="none"/><path d="M9.25 2.75 A4.6 4.6 0 0 1 2.75 9.25" stroke="#e2e2e2" stroke-width="0.8" fill="none"/></svg>
<div class="a" style="left:359px;top:154.34px;font-size:12px;line-height:15px;color:#000;white-space:nowrap;letter-spacing:0px;word-spacing:0px;transform:scaleX(0.905);transform-origin:0 0;">Revert to default configuration</div>
<svg class="a" style="left:341.5px;top:171.6px" width="12" height="12" viewBox="0 0 12 12"><circle cx="6" cy="6" r="4.6" fill="#fbfbfb"/><path d="M2.75 9.25 A4.6 4.6 0 0 1 9.25 2.75" stroke="#5a5a5a" stroke-width="1.5" fill="none"/><path d="M9.25 2.75 A4.6 4.6 0 0 1 2.75 9.25" stroke="#e2e2e2" stroke-width="0.8" fill="none"/><circle cx="6.3" cy="6.3" r="1.9" fill="#000"/></svg>
<div class="a" style="left:359px;top:172.34px;font-size:12px;line-height:15px;color:#000;white-space:nowrap;letter-spacing:0px;word-spacing:0px;transform:scaleX(0.905);transform-origin:0 0;">Save current configuration</div>
<svg class="a" style="left:341.5px;top:190.6px" width="12" height="12" viewBox="0 0 12 12"><circle cx="6" cy="6" r="4.6" fill="#fbfbfb"/><path d="M2.75 9.25 A4.6 4.6 0 0 1 9.25 2.75" stroke="#5a5a5a" stroke-width="1.5" fill="none"/><path d="M9.25 2.75 A4.6 4.6 0 0 1 2.75 9.25" stroke="#e2e2e2" stroke-width="0.8" fill="none"/></svg>
<div class="a" style="left:359px;top:191.34px;font-size:12px;line-height:15px;color:#000;white-space:nowrap;letter-spacing:0px;word-spacing:0px;transform:scaleX(0.905);transform-origin:0 0;">User defined operation</div>
<div class="a" style="left:597px;top:119.34px;font-size:12px;line-height:15px;color:#000;white-space:nowrap;letter-spacing:0px;word-spacing:0px;transform:scaleX(0.89);transform-origin:0 0;">Devices</div>
<div class="a" style="left:596px;top:134px;width:119px;height:69px;background:#fff;border-top:2px solid #6b6b6b;border-left:2px solid #6b6b6b;border-right:1px solid #fff;border-bottom:1px solid #fff"></div>
<div class="a" style="left:598px;top:136px;width:116px;height:66px;overflow:hidden">
<div class="a" style="left:0;top:0px;width:100%;height:26px;background:#3399ff"></div>
<div class="li" style="left:2.7px;top:0.34px;color:#fff;font-size:12px;line-height:15px;height:15px;transform:scaleX(0.875);transform-origin:0 0">0 - BBR</div>
<div class="li" style="left:2.7px;top:13.34px;color:#fff;font-size:12px;line-height:15px;height:15px;transform:scaleX(0.875);transform-origin:0 0">1 - FLASH</div>
<div class="li" style="left:2.7px;top:26.34px;color:#000;font-size:12px;line-height:15px;height:15px;transform:scaleX(0.875);transform-origin:0 0">2 - I2C-EEPROM</div>
<div class="li" style="left:2.7px;top:39.34px;color:#000;font-size:12px;line-height:15px;height:15px;transform:scaleX(0.875);transform-origin:0 0">4 - SPI-FLASH</div>
</div>
<div class="a" style="left:342px;top:215.34px;font-size:12px;line-height:15px;color:#000;white-space:nowrap;letter-spacing:0px;word-spacing:0px;transform:scaleX(0.86);transform-origin:0 0;">Clear</div>
<div class="a" style="left:341px;top:231px;width:119px;height:212px;background:#fff;border-top:2px solid #6b6b6b;border-left:2px solid #6b6b6b;border-right:1px solid #fff;border-bottom:1px solid #fff"></div>
<div class="a" style="left:343px;top:233px;width:100px;height:209px;overflow:hidden">
<div class="li" style="left:2.7px;top:0.34px;color:#6d6d6d;font-size:12px;line-height:15px;height:15px;transform:scaleX(0.875);transform-origin:0 0">0 - PRT</div>
<div class="li" style="left:2.7px;top:13.34px;color:#6d6d6d;font-size:12px;line-height:15px;height:15px;transform:scaleX(0.875);transform-origin:0 0">1 - MSG</div>
<div class="li" style="left:2.7px;top:26.34px;color:#6d6d6d;font-size:12px;line-height:15px;height:15px;transform:scaleX(0.875);transform-origin:0 0">2 - INF</div>
<div class="li" style="left:2.7px;top:39.34px;color:#6d6d6d;font-size:12px;line-height:15px;height:15px;transform:scaleX(0.875);transform-origin:0 0">3 - NAV</div>
<div class="li" style="left:2.7px;top:52.34px;color:#6d6d6d;font-size:12px;line-height:15px;height:15px;transform:scaleX(0.875);transform-origin:0 0">4 - RXM</div>
<div class="li" style="left:2.7px;top:65.34px;color:#6d6d6d;font-size:12px;line-height:15px;height:15px;transform:scaleX(0.875);transform-origin:0 0">5 - Unused</div>
<div class="li" style="left:2.7px;top:78.34px;color:#6d6d6d;font-size:12px;line-height:15px;height:15px;transform:scaleX(0.875);transform-origin:0 0">6 - Unused</div>
<div class="li" style="left:2.7px;top:91.34px;color:#6d6d6d;font-size:12px;line-height:15px;height:15px;transform:scaleX(0.875);transform-origin:0 0">7 - Unused</div>
<div class="li" style="left:2.7px;top:104.34px;color:#6d6d6d;font-size:12px;line-height:15px;height:15px;transform:scaleX(0.875);transform-origin:0 0">8 - Reserved</div>
<div class="li" style="left:2.7px;top:117.34px;color:#6d6d6d;font-size:12px;line-height:15px;height:15px;transform:scaleX(0.875);transform-origin:0 0">9 - RINV</div>
<div class="li" style="left:2.7px;top:130.34px;color:#6d6d6d;font-size:12px;line-height:15px;height:15px;transform:scaleX(0.875);transform-origin:0 0">10 - ANT</div>
<div class="li" style="left:2.7px;top:143.34px;color:#6d6d6d;font-size:12px;line-height:15px;height:15px;transform:scaleX(0.875);transform-origin:0 0">11 - LOG</div>
<div class="li" style="left:2.7px;top:156.34px;color:#6d6d6d;font-size:12px;line-height:15px;height:15px;transform:scaleX(0.875);transform-origin:0 0">12 - FTS</div>
<div class="li" style="left:2.7px;top:169.34px;color:#6d6d6d;font-size:12px;line-height:15px;height:15px;transform:scaleX(0.875);transform-origin:0 0">13 - Unused</div>
<div class="li" style="left:2.7px;top:182.34px;color:#6d6d6d;font-size:12px;line-height:15px;height:15px;transform:scaleX(0.875);transform-origin:0 0">14 - Unused</div>
<div class="li" style="left:2.7px;top:195.34px;color:#6d6d6d;font-size:12px;line-height:15px;height:15px;transform:scaleX(0.875);transform-origin:0 0">15 - Unused</div>
</div>
<div class="a" style="left:443px;top:233px;width:16px;height:209px;background:#ededed;border-left:1px solid #f4f4f4"></div>
<svg class="a" style="left:443px;top:235px" width="16" height="14" viewBox="0 0 16 14"><path d="M4.5 9.5 L8 6 L11.5 9.5 Z" fill="#3a3a3a"/></svg>
<svg class="a" style="left:443px;top:426px" width="16" height="14" viewBox="0 0 16 14"><path d="M4.5 5 L8 8.5 L11.5 5 Z" fill="#3a3a3a"/></svg>
<div class="a" style="left:444px;top:251px;width:14px;height:86px;border:1px solid #979797;border-radius:2px;background:linear-gradient(90deg,#f5f5f5,#dedede)"></div>
<svg class="a" style="left:444px;top:289px" width="14" height="12" viewBox="0 0 14 12"><path d="M4 2.5H10M4 4.5H10M4 6.5H10" stroke="#505050" stroke-width="1"/></svg>
<div class="a" style="left:470px;top:215.34px;font-size:12px;line-height:15px;color:#000;white-space:nowrap;letter-spacing:0px;word-spacing:0px;transform:scaleX(0.86);transform-origin:0 0;">Save</div>
<div class="a" style="left:469px;top:231px;width:119px;height:212px;background:#fff;border-top:2px solid #6b6b6b;border-left:2px solid #6b6b6b;border-right:1px solid #fff;border-bottom:1px solid #fff"></div>
<div class="a" style="left:471px;top:233px;width:100px;height:209px;overflow:hidden">
<div class="a" style="left:0;top:0px;width:100%;height:208px;background:#3697fb"></div>
<div class="li" style="left:2.7px;top:0.34px;color:#587897;font-size:12px;line-height:15px;height:15px;transform:scaleX(0.875);transform-origin:0 0">0 - PRT</div>
<div class="li" style="left:2.7px;top:13.34px;color:#587897;font-size:12px;line-height:15px;height:15px;transform:scaleX(0.875);transform-origin:0 0">1 - MSG</div>
<div class="li" style="left:2.7px;top:26.34px;color:#587897;font-size:12px;line-height:15px;height:15px;transform:scaleX(0.875);transform-origin:0 0">2 - INF</div>
<div class="li" style="left:2.7px;top:39.34px;color:#587897;font-size:12px;line-height:15px;height:15px;transform:scaleX(0.875);transform-origin:0 0">3 - NAV</div>
<div class="li" style="left:2.7px;top:52.34px;color:#587897;font-size:12px;line-height:15px;height:15px;transform:scaleX(0.875);transform-origin:0 0">4 - RXM</div>
<div class="li" style="left:2.7px;top:65.34px;color:#587897;font-size:12px;line-height:15px;height:15px;transform:scaleX(0.875);transform-origin:0 0">5 - Unused</div>
<div class="li" style="left:2.7px;top:78.34px;color:#587897;font-size:12px;line-height:15px;height:15px;transform:scaleX(0.875);transform-origin:0 0">6 - Unused</div>
<div class="li" style="left:2.7px;top:91.34px;color:#587897;font-size:12px;line-height:15px;height:15px;transform:scaleX(0.875);transform-origin:0 0">7 - Unused</div>
<div class="li" style="left:2.7px;top:104.34px;color:#587897;font-size:12px;line-height:15px;height:15px;transform:scaleX(0.875);transform-origin:0 0">8 - Reserved</div>
<div class="li" style="left:2.7px;top:117.34px;color:#587897;font-size:12px;line-height:15px;height:15px;transform:scaleX(0.875);transform-origin:0 0">9 - RINV</div>
<div class="li" style="left:2.7px;top:130.34px;color:#587897;font-size:12px;line-height:15px;height:15px;transform:scaleX(0.875);transform-origin:0 0">10 - ANT</div>
<div class="li" style="left:2.7px;top:143.34px;color:#587897;font-size:12px;line-height:15px;height:15px;transform:scaleX(0.875);transform-origin:0 0">11 - LOG</div>
<div class="li" style="left:2.7px;top:156.34px;color:#587897;font-size:12px;line-height:15px;height:15px;transform:scaleX(0.875);transform-origin:0 0">12 - FTS</div>
<div class="li" style="left:2.7px;top:169.34px;color:#587897;font-size:12px;line-height:15px;height:15px;transform:scaleX(0.875);transform-origin:0 0">13 - Unused</div>
<div class="li" style="left:2.7px;top:182.34px;color:#587897;font-size:12px;line-height:15px;height:15px;transform:scaleX(0.875);transform-origin:0 0">14 - Unused</div>
<div class="li" style="left:2.7px;top:195.34px;color:#587897;font-size:12px;line-height:15px;height:15px;transform:scaleX(0.875);transform-origin:0 0">15 - Unused</div>
</div>
<div class="a" style="left:571px;top:233px;width:16px;height:209px;background:#ededed;border-left:1px solid #f4f4f4"></div>
<svg class="a" style="left:571px;top:235px" width="16" height="14" viewBox="0 0 16 14"><path d="M4.5 9.5 L8 6 L11.5 9.5 Z" fill="#3a3a3a"/></svg>
<svg class="a" style="left:571px;top:426px" width="16" height="14" viewBox="0 0 16 14"><path d="M4.5 5 L8 8.5 L11.5 5 Z" fill="#3a3a3a"/></svg>
<div class="a" style="left:572px;top:251px;width:14px;height:86px;border:1px solid #979797;border-radius:2px;background:linear-gradient(90deg,#f5f5f5,#dedede)"></div>
<svg class="a" style="left:572px;top:289px" width="14" height="12" viewBox="0 0 14 12"><path d="M4 2.5H10M4 4.5H10M4 6.5H10" stroke="#505050" stroke-width="1"/></svg>
<div class="a" style="left:597px;top:215.34px;font-size:12px;line-height:15px;color:#000;white-space:nowrap;letter-spacing:0px;word-spacing:0px;transform:scaleX(0.86);transform-origin:0 0;">Load</div>
<div class="a" style="left:596px;top:231px;width:119px;height:212px;background:#fff;border-top:2px solid #6b6b6b;border-left:2px solid #6b6b6b;border-right:1px solid #fff;border-bottom:1px solid #fff"></div>
<div class="a" style="left:598px;top:233px;width:100px;height:209px;overflow:hidden">
<div class="li" style="left:2.7px;top:0.34px;color:#6d6d6d;font-size:12px;line-height:15px;height:15px;transform:scaleX(0.875);transform-origin:0 0">0 - PRT</div>
<div class="li" style="left:2.7px;top:13.34px;color:#6d6d6d;font-size:12px;line-height:15px;height:15px;transform:scaleX(0.875);transform-origin:0 0">1 - MSG</div>
<div class="li" style="left:2.7px;top:26.34px;color:#6d6d6d;font-size:12px;line-height:15px;height:15px;transform:scaleX(0.875);transform-origin:0 0">2 - INF</div>
<div class="li" style="left:2.7px;top:39.34px;color:#6d6d6d;font-size:12px;line-height:15px;height:15px;transform:scaleX(0.875);transform-origin:0 0">3 - NAV</div>
<div class="li" style="left:2.7px;top:52.34px;color:#6d6d6d;font-size:12px;line-height:15px;height:15px;transform:scaleX(0.875);transform-origin:0 0">4 - RXM</div>
<div class="li" style="left:2.7px;top:65.34px;color:#6d6d6d;font-size:12px;line-height:15px;height:15px;transform:scaleX(0.875);transform-origin:0 0">5 - Unused</div>
<div class="li" style="left:2.7px;top:78.34px;color:#6d6d6d;font-size:12px;line-height:15px;height:15px;transform:scaleX(0.875);transform-origin:0 0">6 - Unused</div>
<div class="li" style="left:2.7px;top:91.34px;color:#6d6d6d;font-size:12px;line-height:15px;height:15px;transform:scaleX(0.875);transform-origin:0 0">7 - Unused</div>
<div class="li" style="left:2.7px;top:104.34px;color:#6d6d6d;font-size:12px;line-height:15px;height:15px;transform:scaleX(0.875);transform-origin:0 0">8 - Reserved</div>
<div class="li" style="left:2.7px;top:117.34px;color:#6d6d6d;font-size:12px;line-height:15px;height:15px;transform:scaleX(0.875);transform-origin:0 0">9 - RINV</div>
<div class="li" style="left:2.7px;top:130.34px;color:#6d6d6d;font-size:12px;line-height:15px;height:15px;transform:scaleX(0.875);transform-origin:0 0">10 - ANT</div>
<div class="li" style="left:2.7px;top:143.34px;color:#6d6d6d;font-size:12px;line-height:15px;height:15px;transform:scaleX(0.875);transform-origin:0 0">11 - LOG</div>
<div class="li" style="left:2.7px;top:156.34px;color:#6d6d6d;font-size:12px;line-height:15px;height:15px;transform:scaleX(0.875);transform-origin:0 0">12 - FTS</div>
<div class="li" style="left:2.7px;top:169.34px;color:#6d6d6d;font-size:12px;line-height:15px;height:15px;transform:scaleX(0.875);transform-origin:0 0">13 - Unused</div>
<div class="li" style="left:2.7px;top:182.34px;color:#6d6d6d;font-size:12px;line-height:15px;height:15px;transform:scaleX(0.875);transform-origin:0 0">14 - Unused</div>
<div class="li" style="left:2.7px;top:195.34px;color:#6d6d6d;font-size:12px;line-height:15px;height:15px;transform:scaleX(0.875);transform-origin:0 0">15 - Unused</div>
</div>
<div class="a" style="left:698px;top:233px;width:16px;height:209px;background:#ededed;border-left:1px solid #f4f4f4"></div>
<svg class="a" style="left:698px;top:235px" width="16" height="14" viewBox="0 0 16 14"><path d="M4.5 9.5 L8 6 L11.5 9.5 Z" fill="#3a3a3a"/></svg>
<svg class="a" style="left:698px;top:426px" width="16" height="14" viewBox="0 0 16 14"><path d="M4.5 5 L8 8.5 L11.5 5 Z" fill="#3a3a3a"/></svg>
<div class="a" style="left:699px;top:251px;width:14px;height:86px;border:1px solid #979797;border-radius:2px;background:linear-gradient(90deg,#f5f5f5,#dedede)"></div>
<svg class="a" style="left:699px;top:289px" width="14" height="12" viewBox="0 0 14 12"><path d="M4 2.5H10M4 4.5H10M4 6.5H10" stroke="#505050" stroke-width="1"/></svg>
<div class="a" style="left:40px;top:577px;width:959px;height:21px;background:#f0f0f0"></div>
<div class="a" style="left:40px;top:575px;width:288px;height:2px;background:#f0f0f0"></div>
<svg class="a" style="left:44px;top:580px" width="18" height="19" viewBox="0 0 18 19"><path d="M4.8 5.2 Q6.5 2.3 9.5 2.3 Q12.6 2.3 12.6 5.5 V9" stroke="#000" stroke-width="2.8" fill="none" stroke-linecap="round"/><path d="M4.8 5.2 Q6.5 2.3 9.5 2.3 Q12.6 2.3 12.6 5.5 V9" stroke="#f8f830" stroke-width="1" fill="none"/><rect x="2.8" y="8.6" width="12" height="8.2" rx="1.6" fill="#f4f41c" stroke="#000" stroke-width="1.7"/><path d="M8 11.2 H10 V14.8 H8Z" fill="#222"/><path d="M7.3 11.4 H10.7" stroke="#222" stroke-width="1.5"/></svg>
<svg class="a" style="left:78px;top:582px" width="15" height="15" viewBox="0 0 15 15"><path d="M1.5 1.5 L13 13 M13 1.5 L1.8 13.2" stroke="#c41a28" stroke-width="2.3" fill="none" stroke-linecap="round"/></svg>
<div class="a" style="left:102px;top:581px;width:1px;height:18px;background:#a8a8a8"></div>
<svg class="a" style="left:109px;top:581px" width="20" height="18" viewBox="0 0 20 18"><path d="M7.5 1.5 H15 L17.5 4 V15.5 H7.5 Z" fill="#fff" stroke="#111" stroke-width="1"/><path d="M9 4.5 H14 M9 7 H16 M9 9.5 H16 M9 12 H16" stroke="#2838c8" stroke-width="1"/><path d="M1 5.5 H6.5 M1 8 H6.5 M1 10.5 H6.5 M1 13 H6.5" stroke="#222" stroke-width="1" stroke-dasharray="1 1"/><path d="M17.5 4 V16.5 H8.5" stroke="#111" stroke-width="1" fill="none"/></svg>
<div class="a" style="left:129.5px;top:583.5px;font-size:12.6px;line-height:14px;color:#111;white-space:nowrap;letter-spacing:0.1px">Send</div>
<svg class="a" style="left:169px;top:580px" width="20" height="19" viewBox="0 0 20 19"><path d="M9.5 2.5 H13.5 L16 5 V9 H9.5 Z" fill="none" stroke="#a4a4a4" stroke-width="1"/><path d="M12 5 V8.5 M12 6 Q13 4.8 14.5 5.5" stroke="#a4a4a4" stroke-width="1" fill="none"/><path d="M2.5 9.5 H6.5 L8 11 V16.5 H2.5 Z" fill="none" stroke="#a4a4a4" stroke-width="1"/><path d="M4.5 3 H6 M4.5 5 H6 M10 13 H11.5 M10 15.5 H11.5" stroke="#b0b0b0" stroke-width="1"/></svg>
<div class="a" style="left:189px;top:583.5px;font-size:12.6px;line-height:14px;color:#b4b4b4;white-space:nowrap">Poll</div>
<div class="a" style="left:218px;top:579px;width:26px;height:21px;background:#f8f8f8;border-top:1px solid #9a9a9a;border-left:1px solid #9a9a9a"></div>
<svg class="a" style="left:223px;top:582px" width="18" height="17" viewBox="0 0 18 17"><path d="M1.7 8.9 H5.3 L7.2 10.8 V15.3 H1.7 Z" fill="#fff" stroke="#000" stroke-width="1.1"/><path d="M5.3 8.9 V10.8 H7.2" fill="none" stroke="#000" stroke-width="0.9"/><path d="M8.8 1.6 H11.4 L12.6 2.8 V8 H8.8 Z" fill="#fff" stroke="#222" stroke-width="1"/><path d="M11.4 4.4 L12.9 6.4 L16.9 2.6" stroke="#1c38a8" stroke-width="1.4" fill="none"/><path d="M9.5 8.5 L11.5 10.3" stroke="#9a9a9a" stroke-width="2"/><path d="M11.5 10.3 L16.6 15.3" stroke="#000" stroke-width="2"/><rect x="2.3" y="3.1" width="1.3" height="1.3" fill="#222"/><rect x="4.8" y="5.2" width="1.3" height="1.3" fill="#222"/></svg>
<div class="a" style="left:247px;top:581px;width:1px;height:18px;background:#a8a8a8"></div>
<svg class="a" style="left:255px;top:581px" width="18" height="17" viewBox="0 0 18 17"><path d="M6.5 1.5 H14.5 L16.5 3.5 V15.5 H6.5 Z" fill="#fff" stroke="#111" stroke-width="1"/><path d="M8 3.2 H13 M11 6 H15 M11 8.5 H15 M11 11 H15 M11 13.5 H15" stroke="#2030c0" stroke-width="1.2"/><rect x="1" y="6.5" width="9.5" height="9.5" fill="#e8e8d8" stroke="#000" stroke-width="1.6"/><path d="M4 8.5 V14.5 M4 12 H7.5 V8.5" stroke="#000" stroke-width="1.3" fill="none"/></svg>
<svg class="a" style="left:282px;top:581px" width="18" height="18" viewBox="0 0 18 18"><rect x="1.5" y="1.5" width="15" height="14" fill="#fff" stroke="#8c8c8c" stroke-width="1"/><path d="M6.5 1.5 V15.5 M6.5 9.5 H16.5" stroke="#8c8c8c" stroke-width="1"/><path d="M9.5 3.5 H15 M9.5 5.5 H15 M9.5 7.5 H15" stroke="#9a1a1a" stroke-width="1.2"/><path d="M7.5 3.5 H8.3 M7.5 5.5 H8.3 M7.5 7.5 H8.3" stroke="#3a9a3a" stroke-width="1"/><path d="M11.5 9 V15 M9 12.5 L11.5 15.5 L14 12.5" stroke="#000" stroke-width="1.6" fill="none"/><path d="M1 7 H7 M4 4.5 L1.2 7 L4 9.5" stroke="#000" stroke-width="1.6" fill="none"/></svg>
<div class="a" style="left:305px;top:579px;width:27px;height:21px;background:#f8f8f8;border-top:1px solid #9a9a9a;border-left:1px solid #9a9a9a"></div>
<svg class="a" style="left:310px;top:582px" width="18" height="17" viewBox="0 0 18 17"><rect x="1.5" y="1.5" width="15" height="14" fill="#fff" stroke="#8c8c8c" stroke-width="1"/><path d="M5.5 1.5 V15.5 M5.5 9.5 H16.5" stroke="#8c8c8c" stroke-width="1"/><path d="M9.5 3.5 H15 M9.5 5.5 H15 M9.5 7.5 H15" stroke="#9a1a1a" stroke-width="1.2"/><path d="M7.5 3.5 H8.3 M7.5 5.5 H8.3 M7.5 7.5 H8.3" stroke="#3a9a3a" stroke-width="1"/><path d="M11 8 V15 M8.3 12.3 L11 15.5 L13.7 12.3" stroke="#000" stroke-width="1.6" fill="none"/></svg>
<div class="a" style="left:334px;top:581px;width:1px;height:18px;background:#a8a8a8"></div>
<div class="a" style="left:97px;top:580px;width:79px;height:22px;border:1px solid #d84a50"></div>
<svg class="a" style="left:0px;top:530px" width="240" height="80" viewBox="0 0 240 80"><path d="M108 33.5 C112 28, 121 20, 134 15.5 C147 13, 165 13.5, 176 16.5 C188 20.5, 197 30, 202 41 C205.5 50, 204 61, 197 67.5 C191 73, 184 75, 176 75.5 L90 76.5 C80 76.5, 72 74, 71 67 C70.5 59, 71 51, 74 45 C77.5 36, 84 29.5, 92 29 C99 28.5, 104 31, 108 33.5" stroke="#f42a30" stroke-width="7" fill="none" stroke-linecap="round" stroke-linejoin="round"/><circle cx="108" cy="34" r="4.3" fill="#f42a30"/><circle cx="113" cy="28.5" r="3.6" fill="#f42a30"/></svg>
</body></html>
